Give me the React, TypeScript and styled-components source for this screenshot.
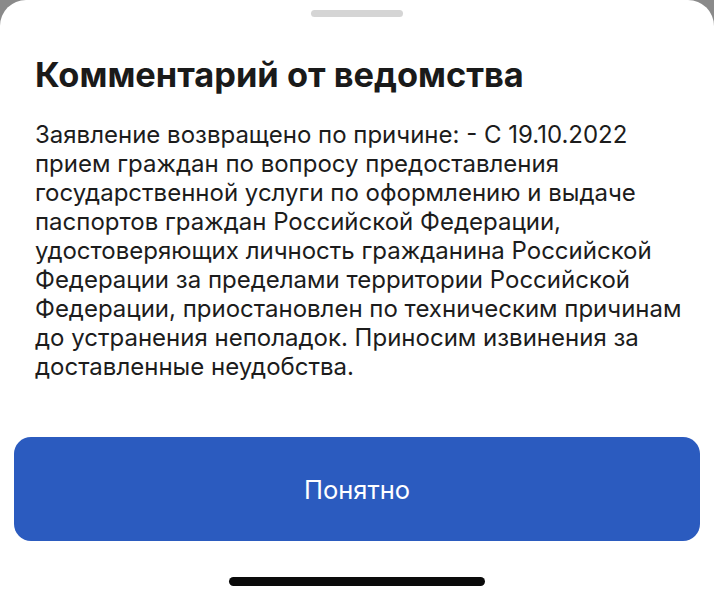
import React from "react";
import styled, { createGlobalStyle } from "styled-components";

const GlobalStyle = createGlobalStyle`
  html, body {
    margin: 0;
    padding: 0;
    background: #8a8a8a;
  }
  body {
    font-family: Inter, "Noto Sans", "Liberation Sans", sans-serif;
  }
`;

const Sheet = styled.div`
  width: 714px;
  height: 600px;
  background: #ffffff;
  border-radius: 26px 26px 0 0;
  display: flex;
  flex-direction: column;
  align-items: stretch;
  box-sizing: border-box;
  padding: 10px 14px 0 14px;
`;

const Grabber = styled.div`
  align-self: center;
  width: 92px;
  height: 7px;
  border-radius: 4px;
  background: #d5d5d5;
`;

const Content = styled.div`
  padding: 0 6px 0 21px;
`;

const Title = styled.h1`
  margin: 38px 0 0 0;
  font-size: 34.4px;
  line-height: 40px;
  font-weight: 700;
  color: #1a1a1a;
`;

const Body = styled.p`
  margin: 25px 0 0 0;
  font-size: 24px;
  line-height: 29px;
  font-weight: 400;
  color: #1c1c1c;
`;

const OkButton = styled.button`
  margin-top: 56px;
  height: 104px;
  border: none;
  border-radius: 17px;
  background: #2b5bbf;
  color: #ffffff;
  font-family: inherit;
  font-size: 25.5px;
  font-weight: 400;
  cursor: pointer;
`;

const HomeIndicator = styled.div`
  align-self: center;
  margin-top: 36px;
  width: 256px;
  height: 9px;
  border-radius: 5px;
  background: #0a0a0a;
`;

const App = () => {
  return (
    <>
      <GlobalStyle />
      <Sheet>
        <Grabber />
        <Content>
          <Title>Комментарий от ведомства</Title>
          <Body>
            Заявление возвращено по причине: - С 19.10.2022 прием граждан по
            вопросу предоставления государственной услуги по оформлению и выдаче
            паспортов граждан Российской Федерации, удостоверяющих личность
            гражданина Российской Федерации за пределами территории Российской
            Федерации, приостановлен по техническим причинам до устранения
            неполадок. Приносим извинения за доставленные неудобства.
          </Body>
        </Content>
        <OkButton>Понятно</OkButton>
        <HomeIndicator />
      </Sheet>
    </>
  );
};

export default App;
